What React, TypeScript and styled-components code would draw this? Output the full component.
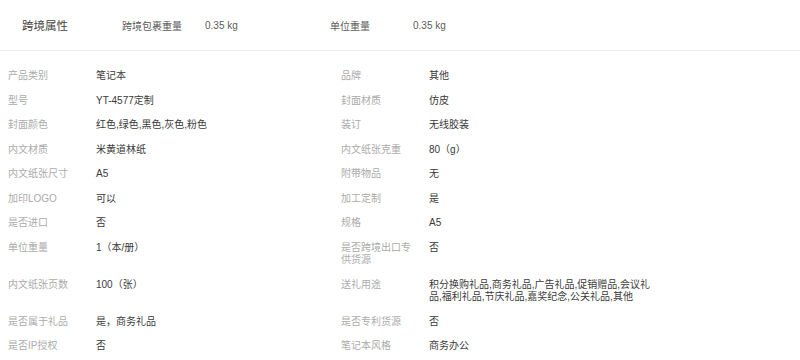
import React from 'react';
import styled, { createGlobalStyle } from 'styled-components';

const GlobalStyle = createGlobalStyle`
  body {
    margin: 0;
    background: #ffffff;
    font-family: "Liberation Sans", "Noto Sans CJK SC", sans-serif;
  }
`;

const Page = styled.div`
  width: 800px;
  height: 360px;
  overflow: hidden;
  background: #ffffff;
`;

const CrossBorder = styled.div`
  display: flex;
  align-items: center;
  height: 50px;
  padding-left: 22px;
  border-bottom: 1px solid #ececec; /* light divider */
`;

const SectionTitle = styled.div`
  width: 100px;
  font-size: 11.5px;
  color: #444;
`;

const HeadLabel = styled.div`
  width: 83px;
  font-size: 10px;
  color: #5c5c5c;
`;

const HeadValue = styled.div`
  width: 125px;
  font-size: 10px;
  color: #5c5c5c;
`;

const AttrGrid = styled.div`
  display: grid;
  grid-template-columns: 333px 333px;
  padding: 13px 0 0 8px;
`;

const Item = styled.div`
  display: flex;
  align-items: flex-start;
  padding: 6px 0;
  font-size: 10px;
  line-height: 12.5px;
`;

const Label = styled.div`
  width: 76px;
  padding-right: 12px;
  flex-shrink: 0;
  color: #ababab;
`;

const Value = styled.div`
  width: 224px;
  color: #3a3a3a;
`;

const attrs: [string, string][] = [
  ['产品类别', '笔记本'],
  ['品牌', '其他'],
  ['型号', 'YT-4577定制'],
  ['封面材质', '仿皮'],
  ['封面颜色', '红色,绿色,黑色,灰色,粉色'],
  ['装订', '无线胶装'],
  ['内文材质', '米黄道林纸'],
  ['内文纸张克重', '80（g）'],
  ['内文纸张尺寸', 'A5'],
  ['附带物品', '无'],
  ['加印LOGO', '可以'],
  ['加工定制', '是'],
  ['是否进口', '否'],
  ['规格', 'A5'],
  ['单位重量', '1（本/册）'],
  ['是否跨境出口专供货源', '否'],
  ['内文纸张页数', '100（张）'],
  ['送礼用途', '积分换购礼品,商务礼品,广告礼品,促销赠品,会议礼品,福利礼品,节庆礼品,嘉奖纪念,公关礼品,其他'],
  ['是否属于礼品', '是，商务礼品'],
  ['是否专利货源', '否'],
  ['是否IP授权', '否'],
  ['笔记本风格', '商务办公'],
];

const App: React.FC = () => {
  return (
    <Page>
      <GlobalStyle />
      <CrossBorder>
        <SectionTitle>跨境属性</SectionTitle>
        <HeadLabel>跨境包裹重量</HeadLabel>
        <HeadValue>0.35 kg</HeadValue>
        <HeadLabel>单位重量</HeadLabel>
        <HeadValue>0.35 kg</HeadValue>
      </CrossBorder>
      <AttrGrid>
        {attrs.map(([label, value]) => (
          <Item key={label}>
            <Label>{label}</Label>
            <Value>{value}</Value>
          </Item>
        ))}
      </AttrGrid>
    </Page>
  );
};

export default App;
